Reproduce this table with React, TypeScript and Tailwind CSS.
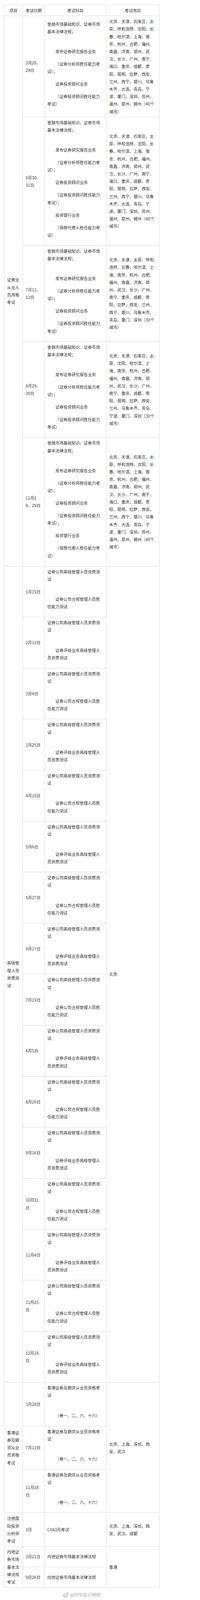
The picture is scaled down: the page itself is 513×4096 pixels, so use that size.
type Para = { lines: string[]; indent?: boolean };

const JINRONG: Para = { lines: ["金融市场基础知识、证券市场", "基本法律法规；", ""] };
const FABU: Para = { indent: true, lines: ["发布证券研究报告业务"] };
const FENXI: Para = { indent: true, lines: ["（证券分析师胜任能力考", "试）；"] };
const TOUGU: Para = { indent: true, lines: ["证券投资顾问业务"] };
const TOUGU_EXAM_END: Para = { indent: true, lines: ["（证券投资顾问胜任能力", "考试）"] };
const TOUGU_EXAM: Para = { indent: true, lines: ["（证券投资顾问胜任能力", "考试）；"] };
const TOUHANG: Para = { indent: true, lines: ["投资银行业务"] };
const BAOJIAN: Para = { indent: true, lines: ["（保荐代表人胜任能力考", "试）"] };

const SHORT = [JINRONG, FABU, FENXI, TOUGU, TOUGU_EXAM_END];
const LONG = [JINRONG, FABU, FENXI, TOUGU, TOUGU_EXAM, TOUHANG, BAOJIAN];

const CITIES40 = [
  "北京、天津、石家庄、太",
  "原、呼和浩特、沈阳、长",
  "春、哈尔滨、上海、南",
  "京、杭州、合肥、福州、",
  "南昌、济南、郑州、武",
  "汉、长沙、广州、南宁、",
  "海口、重庆、成都、贵",
  "阳、昆明、拉萨、西安、",
  "兰州、西宁、银川、乌鲁",
  "木齐、大连、青岛、宁",
  "波、厦门、深圳、苏州、",
  "温州、泉州、赣州（40个",
  "城市）",
];

const CITIES30A = [
  "北京、天津、太原、呼和",
  "浩特、长春、哈尔滨、上",
  "海、南京、杭州、合肥、",
  "福州、南昌、济南、郑",
  "州、武汉、长沙、广州、",
  "南宁、重庆、成都、贵",
  "阳、拉萨、西安、兰州、",
  "西宁、银川、乌鲁木齐、",
  "青岛、厦门、深圳（30个",
  "城市）",
];

const CITIES30B = [
  "北京、天津、石家庄、太",
  "原、沈阳、哈尔滨、上",
  "海、南京、杭州、合肥、",
  "福州、南昌、济南、郑",
  "州、武汉、长沙、广州、",
  "南宁、重庆、成都、贵",
  "阳、昆明、拉萨、西安、",
  "兰州、乌鲁木齐、青岛、",
  "宁波、厦门、深圳（30个",
  "城市）",
];

const securities = [
  { date: ["3月28、", "29日"], subjects: SHORT, places: CITIES40 },
  { date: ["5月30、", "31日"], subjects: LONG, places: CITIES40 },
  { date: ["7月11、", "12日"], subjects: SHORT, places: CITIES30A },
  { date: ["8月29、", "30日"], subjects: SHORT, places: CITIES30B },
  { date: ["11月2", "8、29日"], subjects: LONG, places: CITIES40 },
];

const GAOJI: Para = { lines: ["证券公司高级管理人员资质测", "试", ""] };
const HEGUI: Para = { indent: true, lines: ["证券公司合规管理人员胜", "任能力测试"] };
const PINGJI: Para = { indent: true, lines: ["证券评级业务高级管理人", "员资质测试"] };

const seniorDates = [
  ["1月15日"],
  ["2月12日"],
  ["3月4日"],
  ["3月25日"],
  ["4月15日"],
  ["5月6日"],
  ["5月27日"],
  ["6月17日"],
  ["7月15日"],
  ["8月5日"],
  ["8月26日"],
  ["9月16日"],
  ["10月21", "日"],
  ["11月4日"],
  ["11月25", "日"],
  ["12月16", "日"],
];

const HK_EXAM: Para[] = [
  { lines: ["香港证券及期货从业员资格考", "试", ""] },
  { indent: true, lines: ["（卷一、二、六、十六）"] },
];
const hkDates = [["3月28日"], ["7月11日"], ["11月28", "日"]];

const cell = "border border-[#dcdcdc] px-[7px] py-[4px] align-middle text-left whitespace-nowrap";

function Lines({ lines }: { lines: string[] }) {
  return (
    <>
      {lines.map((l, i) => (
        <span key={i} className="block">
          {l === "" ? "\u00a0" : l}
        </span>
      ))}
    </>
  );
}

// paragraphs in the subject column: every one keeps a bottom margin, first line may be indented
function Paras({ paras }: { paras: Para[] }) {
  return (
    <>
      {paras.map((p, i) => (
        <div key={i} className="mb-[12.8px]">
          {p.lines.map((l, j) => (
            <span key={j} className={j === 0 && p.indent ? "block indent-[2em]" : "block"}>
              {l === "" ? "\u00a0" : l}
            </span>
          ))}
        </div>
      ))}
    </>
  );
}

function WeiboLogo() {
  return (
    <svg width="17" height="15" viewBox="0 0 17 15" fill="none">
      <path
        d="M6.5 4.2C3.6 5.4 1 7.6 1.2 10.2c.2 2.6 3.4 4.2 7 3.9 3.8-.3 6.6-2.4 6.3-4.7-.2-1.4-1.4-1.9-2.2-2.1.4-.9.5-1.9-.2-2.4-.8-.5-2.3 0-3.3.5.3-.9.2-1.7-.3-2-.6-.4-1.3-.1-2 .8z"
        fill="#ececec"
        stroke="#a9a9a9"
        strokeWidth="0.9"
      />
      <ellipse cx="7" cy="10.4" rx="3.4" ry="2.3" fill="#f6f6f6" stroke="#a9a9a9" strokeWidth="0.8" />
      <circle cx="6.4" cy="10.6" r="0.9" fill="#a9a9a9" />
      <path d="M11.2 3.1a3.2 3.2 0 0 1 3 3.2" stroke="#a9a9a9" strokeWidth="0.9" strokeLinecap="round" />
      <path d="M11.4 0.9a5.4 5.4 0 0 1 5 5.6" stroke="#a9a9a9" strokeWidth="0.9" strokeLinecap="round" />
    </svg>
  );
}

export default function App() {
  return (
    <div className="min-h-screen bg-white pt-[12px] pl-[10px] font-['Noto_Sans_CJK_SC','Noto_Sans',sans-serif] text-[10.4px] leading-[19.2px] text-[#333333]">
      <table className="w-[398.3px] table-fixed border-collapse">
        <colgroup>
          <col className="w-[47.7px]" />
          <col className="w-[55.6px]" />
          <col className="w-[158.8px]" />
          <col className="w-[136.2px]" />
        </colgroup>
        <thead>
          <tr>
            <th className={`${cell} !text-center font-normal`}>项目</th>
            <th className={`${cell} !text-center font-normal`}>考试日期</th>
            <th className={`${cell} !text-center font-normal`}>考试科目</th>
            <th className={`${cell} !text-center font-normal`}>考试地点</th>
          </tr>
        </thead>
        <tbody>
          {securities.map((r, i) => (
            <tr key={`s${i}`}>
              {i === 0 && (
                <td rowSpan={securities.length} className={cell}>
                  <Lines lines={["证券业", "从业人", "员资格", "考试"]} />
                </td>
              )}
              <td className={cell}>
                <Lines lines={r.date} />
              </td>
              <td className={cell}>
                <Paras paras={r.subjects} />
              </td>
              <td className={cell}>
                <Lines lines={r.places} />
              </td>
            </tr>
          ))}

          {seniorDates.map((d, i) => (
            <tr key={`g${i}`}>
              {i === 0 && (
                <td rowSpan={seniorDates.length} className={cell}>
                  <Lines lines={["高级管", "理人员", "资质测", "试"]} />
                </td>
              )}
              <td className={cell}>
                <Lines lines={d} />
              </td>
              <td className={cell}>
                <Paras paras={[GAOJI, i % 2 === 0 ? HEGUI : PINGJI]} />
              </td>
              {i === 0 && (
                <td rowSpan={seniorDates.length} className={cell}>
                  北京
                </td>
              )}
            </tr>
          ))}

          {hkDates.map((d, i) => (
            <tr key={`h${i}`}>
              {i === 0 && (
                <td rowSpan={hkDates.length} className={cell}>
                  <Lines lines={["香港证", "券及期", "货从业", "员资格", "考试"]} />
                </td>
              )}
              <td className={cell}>
                <Lines lines={d} />
              </td>
              <td className={cell}>
                <Paras paras={HK_EXAM} />
              </td>
              {i === 0 && (
                <td rowSpan={hkDates.length} className={cell}>
                  <Lines lines={["北京、上海、深圳、西", "安、武汉"]} />
                </td>
              )}
            </tr>
          ))}

          <tr>
            <td className={cell}>
              <Lines lines={["注册国", "际投资", "分析师", "考试"]} />
            </td>
            <td className={cell}>3月</td>
            <td className={cell}>CIIA3月考试</td>
            <td className={cell}>
              <Lines lines={["北京、上海、深圳、西", "安、武汉、成都"]} />
            </td>
          </tr>

          <tr>
            <td rowSpan={2} className={cell}>
              <Lines lines={["内地证", "券市场", "基本法", "律法规", "考试"]} />
            </td>
            <td className={cell}>3月21日</td>
            <td className={cell}>内地证券市场基本法律法规</td>
            <td rowSpan={2} className={cell}>
              香港
            </td>
          </tr>
          <tr>
            <td className={cell}>9月26日</td>
            <td className={cell}>内地证券市场基本法律法规</td>
          </tr>
        </tbody>
      </table>

      <div className="flex w-[398.3px] items-center justify-center gap-[2px] pt-[10px]">
        <WeiboLogo />
        <span className="text-[11.5px] leading-[16px] text-[#d2d2d2] [text-shadow:0_0_1px_#8c8c8c]">
          @中华会计网校
        </span>
      </div>
    </div>
  );
}
